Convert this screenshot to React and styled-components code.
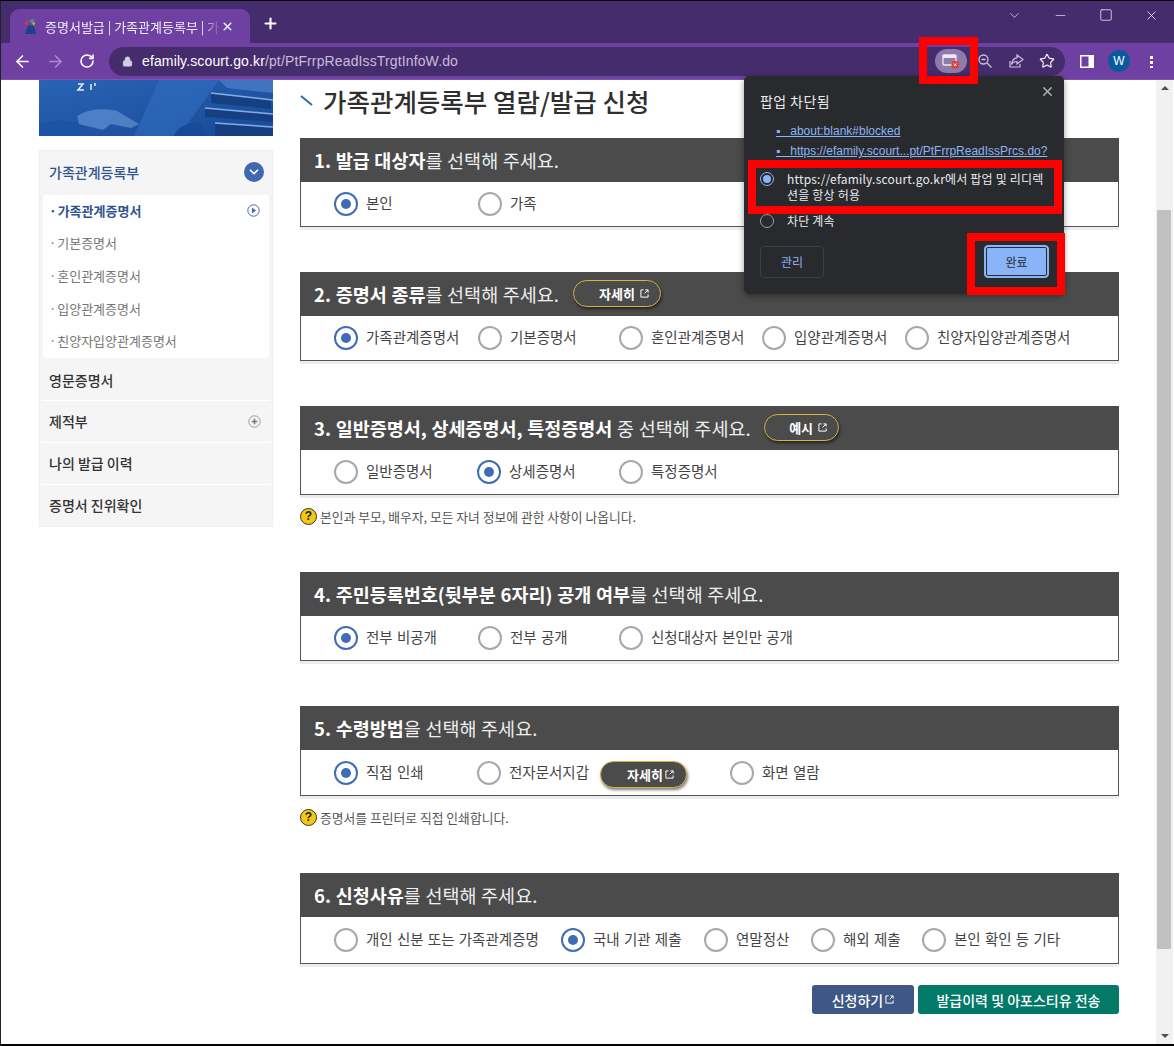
import React from 'react';
import styled, { createGlobalStyle } from 'styled-components';
import { ArrowLeft, ArrowRight, RotateCw, Lock, Star, X, Plus, ChevronDown, Minus, Square } from 'lucide-react';

const FONT = '"Noto Sans CJK KR", "Liberation Sans", sans-serif';

const Global = createGlobalStyle`
  html, body { margin: 0; padding: 0; background: #fff; }
  body { font-family: ${FONT}; }
  * { box-sizing: border-box; }
`;

const Screen = styled.div`
  position: relative;
  width: 1174px;
  height: 1046px;
  overflow: hidden;
  display: flex;
  flex-direction: column;
  background: #fff;
  border-top: 1px solid #000;
  border-bottom: 2px solid #000;
  border-left: 1px solid #222;
`;

const TabStrip = styled.div`
  height: 42px;
  flex: none;
  background: #452c6c;
  display: flex;
  align-items: flex-end;
  padding-left: 9px;
  color: #fff;
`;

const Tab = styled.div`
  width: 240px;
  height: 34px;
  background: #6d40a1;
  border-radius: 9px 9px 0 0;
  display: flex;
  align-items: center;
  padding: 0 10px 0 13px;
  font-size: 13px;
  color: #f0eaf6;
  white-space: nowrap;
`;

const TabTitle = styled.span`
  margin-left: 8px;
  width: 176px;
  overflow: hidden;
  mask-image: linear-gradient(to right, #000 90%, transparent 100%);
`;

const NewTab = styled.div`
  margin: 0 0 7px 12px;
  height: 26px;
  display: flex;
  align-items: center;
`;

const WindowBtns = styled.div`
  margin-left: auto;
  align-self: flex-start;
  display: flex;
  align-items: center;
  height: 28px;
  padding-right: 15px;
  gap: 31px;
`;

const Toolbar = styled.div`
  height: 37px;
  flex: none;
  background: #6d40a1;
  display: flex;
  align-items: center;
  padding-left: 12px;
  color: #fff;
  border-bottom: 1px solid #7f56ad;
`;

const NavIcons = styled.div`
  display: flex;
  align-items: center;
  gap: 14px;
  width: 96px;
`;

const Omnibox = styled.div`
  width: 956px;
  height: 29px;
  border-radius: 15px;
  background: #452c6c;
  display: flex;
  align-items: center;
  padding-left: 13px;
  font-family: "Liberation Sans", sans-serif;
  font-size: 14px;
  letter-spacing: 0.13px;
  color: #c9bcd9;
`;

const Host = styled.span`
  color: #fff;
  margin-left: 9px;
`;

const OmniIcons = styled.div`
  margin-left: auto;
  display: flex;
  align-items: center;
  gap: 15px;
  padding-right: 10px;
`;

const PopupChip = styled.div`
  width: 32px;
  height: 24px;
  border-radius: 12px;
  background: #8f7aa9;
  display: flex;
  align-items: center;
  justify-content: center;
  margin-right: -5px;
`;

const ToolRight = styled.div`
  display: flex;
  align-items: center;
  margin-left: 15px;
  gap: 14px;
`;

const Avatar = styled.div`
  width: 22px;
  height: 22px;
  border-radius: 50%;
  background: #0b5aa0;
  color: #fff;
  font: 12px "Liberation Sans", sans-serif;
  display: flex;
  align-items: center;
  justify-content: center;
`;

const Dots = styled.div`
  width: 3px;
  height: 13px;
  margin-left: 6px;
  background: radial-gradient(circle, #fff 1.5px, transparent 1.8px) 0 0 / 3px 5px;
`;

const Page = styled.div`
  flex: 1;
  display: flex;
  min-height: 0;
`;

const Sidebar = styled.div`
  width: 234px;
  margin-left: 38px;
  flex: none;
`;

const Banner = styled.svg`
  display: block;
  width: 234px;
  height: 56px;
`;

const Menu = styled.div`
  margin-top: 14px;
  background: #f5f5f6;
  border: 1px solid #efefef;
`;

const MenuHead = styled.div`
  height: 44px;
  display: flex;
  align-items: center;
  justify-content: space-between;
  padding: 0 8px 2px 9px;
  font-size: 14px;
  font-weight: 500;
  color: ${p => (p.$active ? '#30548f' : '#333')};
`;

const MenuRow = styled(MenuHead)`
  height: 42px;
  border-top: ${p => (p.$first ? 'none' : '1px solid #fff')};
  margin: 0 2px;
  padding: ${p => (p.$first ? '2px' : '0')} 9px 0 7px;
`;

const Circle = styled.div`
  width: 20px;
  height: 20px;
  border-radius: 50%;
  background: #3e68b0;
  display: flex;
  align-items: center;
  justify-content: center;
  color: #fff;
`;

const SubMenu = styled.div`
  background: #fff;
  margin: 0 3px;
  border-radius: 2px;
`;

const SubItem = styled.div`
  height: 32.6px;
  display: flex;
  align-items: center;
  justify-content: space-between;
  padding: 0 9px 2px 6px;
  font-size: 13px;
  word-spacing: -2px;
  color: ${p => (p.$active ? '#30548f' : '#777')};
  font-weight: ${p => (p.$active ? 700 : 400)};
`;

const Main = styled.div`
  width: 819px;
  margin-left: 27px;
  flex: none;
`;

const TitleRow = styled.div`
  height: 58px;
  display: flex;
  align-items: center;
  padding-bottom: 18px;
  gap: 10px;
  font-size: 25.5px;
  font-weight: 500;
  color: #2f2f2f;
  white-space: nowrap;
`;

const Section = styled.div`
  margin-top: ${p => p.$mt || 0}px;
`;

const SectionHead = styled.div`
  height: 44px;
  background: #4b4b4b;
  display: flex;
  align-items: center;
  padding: 0 0 1px 14px;
  font-size: 18.5px;
  word-spacing: 0.5px;
  color: #eee;
  white-space: pre;
  b { color: #fff; font-weight: 700; }
`;

const Options = styled.div`
  height: ${p => p.$h || 45}px;
  border: 1px solid #555;
  border-top: none;
  box-shadow: 0 3px 0 #ececec;
  display: flex;
  align-items: center;
  padding-left: 33px;
`;

const Option = styled.label`
  width: ${p => p.$w}px;
  flex: none;
  display: flex;
  align-items: center;
  gap: 8px;
  font-size: 14.5px;
  word-spacing: 1px;
  line-height: 22px;
  color: #444;
  white-space: nowrap;
`;

const Radio = styled.span`
  width: 24px;
  height: 24px;
  flex: none;
  border-radius: 50%;
  border: 2px solid ${p => (p.$on ? '#3e6db5' : '#a8a8a8')};
  background: #fff;
  display: flex;
  align-items: center;
  justify-content: center;
  &::after {
    content: '';
    width: 10px;
    height: 10px;
    border-radius: 50%;
    background: ${p => (p.$on ? '#3e6db5' : 'transparent')};
  }
`;

const OptionLabel = styled.span`
  margin-top: -2px;
`;

const Pill = styled.span`
  width: ${p => p.$w}px;
  height: 27px;
  flex: none;
  margin: 4px 0 0 3px;
  padding-left: 14px;
  border-radius: 14px;
  border: 1.5px solid #d9b23c;
  background: #4b4b4b;
  color: #fff;
  box-shadow: 1px 2px 3px rgba(0, 0, 0, 0.5);
  display: inline-flex;
  align-items: center;
  justify-content: center;
  gap: 2px;
  font-size: 13px;
  font-weight: 700;
  word-spacing: 0;
`;

const HeadPill = styled(Pill)`
  margin: 0 0 0 ${p => p.$ml}px;
`;

const Note = styled.div`
  height: 22px;
  margin-top: 10px;
  display: flex;
  align-items: center;
  gap: 3px;
  font-size: 12.8px;
  color: #555;
`;

const Help = styled.span`
  width: 17px;
  height: 17px;
  border-radius: 50%;
  background: #f2c811;
  border: 1.5px solid #333;
  color: #222;
  font: 700 12px "Liberation Sans", sans-serif;
  display: flex;
  align-items: center;
  justify-content: center;
`;

const Actions = styled.div`
  margin-top: 21px;
  display: flex;
  justify-content: flex-end;
  gap: 4px;
`;

const ActionBtn = styled.button`
  width: ${p => p.$w}px;
  height: 29px;
  border: none;
  border-radius: 3px;
  background: ${p => p.$bg};
  color: #fff;
  font-family: ${FONT};
  font-size: 14px;
  font-weight: 500;
  display: flex;
  align-items: center;
  justify-content: center;
  gap: 2px;
  padding: 0;
`;

const Scrollbar = styled.div`
  margin-left: 37px;
  width: 17px;
  background: #f1f1f1;
  display: flex;
  flex-direction: column;
  align-items: center;
  justify-content: space-between;
  padding: 6px 0;
  position: relative;
`;

const Thumb = styled.div`
  position: absolute;
  left: 1px;
  top: 130px;
  width: 14px;
  height: 739px;
  background: #c1c1c1;
`;

const Tri = styled.span`
  width: 0;
  height: 0;
  border-left: 4px solid transparent;
  border-right: 4px solid transparent;
  ${p => (p.$up ? 'border-bottom: 4px solid #505050;' : 'border-top: 4px solid #505050;')}
`;

const Bubble = styled.div`
  position: absolute;
  left: 743px;
  top: 75px;
  width: 320px;
  height: 218px;
  background: #292a2d;
  border-radius: 5px;
  box-shadow: 0 2px 6px rgba(0, 0, 0, 0.4);
  color: #e8eaed;
  padding: 13px 16px;
`;

const BubbleTitle = styled.div`
  font-size: 14px;
  line-height: 24px;
  letter-spacing: 0.4px;
`;

const BubbleClose = styled.div`
  position: absolute;
  right: 9px;
  top: 8px;
  color: #aeb1b6;
  display: flex;
`;

const BlockedLink = styled.a`
  display: block;
  margin-left: 16px;
  font-family: "Liberation Sans", "Noto Sans CJK KR", sans-serif;
  font-size: 12px;
  line-height: 20px;
  color: #8ab4f8;
  text-decoration: underline;
  white-space: pre;
`;

const Links = styled.div`
  margin-top: 8px;
`;

const Choice = styled.div`
  display: flex;
  gap: 13px;
  margin-top: ${p => p.$mt}px;
  font-size: 12px;
  line-height: 16px;
  letter-spacing: 0.2px;
`;

const ChoiceRadio = styled.span`
  width: 14px;
  height: 14px;
  flex: none;
  margin-top: 1px;
  border-radius: 50%;
  border: 1.5px solid ${p => (p.$on ? '#8ab4f8' : '#9aa0a6')};
  display: flex;
  align-items: center;
  justify-content: center;
  &::after {
    content: '';
    width: 8px;
    height: 8px;
    border-radius: 50%;
    background: ${p => (p.$on ? '#8ab4f8' : 'transparent')};
  }
`;

const BubbleFoot = styled.div`
  position: absolute;
  left: 16px;
  right: 15px;
  bottom: 16px;
  display: flex;
  justify-content: space-between;
  align-items: center;
`;

const ManageBtn = styled.div`
  width: 64px;
  height: 32px;
  border: 1px solid #3c4043;
  border-radius: 4px;
  color: #8ab4f8;
  font-size: 12px;
  display: flex;
  align-items: center;
  justify-content: center;
`;

const DoneBtn = styled.div`
  width: 65px;
  height: 33px;
  border-radius: 4px;
  background: #8ab4f8;
  border: 1px solid #8ab4f8;
  outline: 1px solid #292a2d;
  outline-offset: -3px;
  color: #292a2d;
  font-size: 12px;
  display: flex;
  align-items: center;
  justify-content: center;
`;

const RedBox = styled.div`
  position: absolute;
  left: ${p => p.$x}px;
  top: ${p => p.$y}px;
  width: ${p => p.$w}px;
  height: ${p => p.$h}px;
  border: 8px solid #f00;
  pointer-events: none;
`;

const ExtIcon = ({ size = 9 }) => (
  <svg width={size} height={size} viewBox="0 0 10 10" fill="none" stroke="currentColor" strokeWidth="1.1">
    <path d="M4 1H1v8h8V6M5 5l4-4M6 1h3v3" />
  </svg>
);

const Favicon = () => (
  <svg width="14" height="17" viewBox="0 0 14 17">
    <path d="M2 16 5 7l6 1 2 8z" fill="#1e3f8a" />
    <path d="M1 5l4 3 1-6z" fill="#d8324a" />
    <path d="M6 2l6-1-3 5z" fill="#2f9e8f" />
    <path d="M9 5l3-1-1 4z" fill="#e2b93b" />
  </svg>
);

const ZoomOut = () => (
  <svg width="16" height="16" viewBox="0 0 16 16" fill="none" stroke="#cdbfe0" strokeWidth="1.3">
    <circle cx="6.5" cy="6.5" r="4.5" />
    <path d="M10 10l4.5 4.5M4.5 6.5h4" />
  </svg>
);

const Share = () => (
  <svg width="16" height="16" viewBox="0 0 16 16" fill="none" stroke="#cdbfe0" strokeWidth="1.2">
    <path d="M2 8v6h10v-3" />
    <path d="M9 2l6 4.5L9 11V8.5C6 8.5 4.5 9.5 3.5 11.5 4 7.5 6 5 9 4.8z" />
  </svg>
);

const PopupIcon = () => (
  <svg width="18" height="16" viewBox="0 0 18 16">
    <rect x="1" y="2" width="13" height="10" rx="1" fill="none" stroke="#efe9f5" strokeWidth="1.3" />
    <rect x="1" y="2" width="13" height="3" fill="#efe9f5" />
    <rect x="9.5" y="8" width="7.5" height="7.5" rx="2" fill="#d9453d" />
    <path d="M12 10.5l2.5 2.5M14.5 10.5L12 13" stroke="#fff" strokeWidth="0.9" />
  </svg>
);

const SidePanel = () => (
  <svg width="14" height="13" viewBox="0 0 14 13">
    <rect width="14" height="13" fill="#fff" />
    <rect x="1.5" y="1.5" width="7" height="10" fill="#6d40a1" />
  </svg>
);

const PlayDot = () => (
  <svg width="13" height="13" viewBox="0 0 13 13">
    <circle cx="6.5" cy="6.5" r="5.7" fill="none" stroke="#3e68b0" strokeWidth="1" />
    <path d="M5 3.5l4 3-4 3z" fill="#3e68b0" />
  </svg>
);

const PlusDot = () => (
  <svg width="13" height="13" viewBox="0 0 13 13">
    <circle cx="6.5" cy="6.5" r="5.7" fill="none" stroke="#999" strokeWidth="1" />
    <path d="M6.5 3.7v5.6M3.7 6.5h5.6" stroke="#777" strokeWidth="1.6" />
  </svg>
);

const TitleMark = () => (
  <svg width="13" height="11" viewBox="0 0 13 11">
    <path d="M1 1l11 9" stroke="#2f6aa8" strokeWidth="2" />
  </svg>
);

// photo of hands on a keyboard next to a stack of books, in blue tones
const BannerArt = () => (
  <Banner viewBox="0 0 234 56" preserveAspectRatio="none">
    <defs>
      <linearGradient id="bannerFill" x1="0" y1="0" x2="1" y2="1">
        <stop offset="0" stopColor="#2a63b4" />
        <stop offset="1" stopColor="#174a98" />
      </linearGradient>
    </defs>
    <rect width="234" height="56" fill="url(#bannerFill)" />
    <path d="M120 0h60l-40 56H95z" fill="#3570c2" opacity="0.55" />
    <path d="M0 44c20-6 36-4 48 2l-10 10H0z" fill="#1c54a4" />
    <path d="M38 36c12-8 30-8 40-5l22 13-8 4-20-4-8 6-24-6z" fill="#5a88cc" opacity="0.8" />
    <path d="M135 56c2-8 12-14 26-13l6 13z" fill="#174a98" />
    <path d="M172 14l60 7v8l-60-6zM166 29l68 6v7l-68-5zM176 44l58 4v8h-58z" fill="#153f80" />
    <path d="M172 13l62 7M166 28l68 6M176 43l58 4" stroke="#86abe0" strokeWidth="1.5" />
    <path d="M180 0h54v13l-46-5z" fill="#4a7cc6" opacity="0.8" />
    <path d="M39 4h5l-5 6h6M52 4v6M56 3v3" stroke="#e4ecf7" strokeWidth="1.5" fill="none" />
  </Banner>
);

const sections = [
  {
    mt: 0,
    head: <><b>1. 발급 대상자</b>를 선택해 주세요.</>,
    options: [['본인', 144, true], ['가족', 140]],
  },
  {
    mt: 45,
    head: <><b>2. 증명서 종류</b>를 선택해 주세요.<HeadPill $w={88} $ml={14}>자세히 <ExtIcon /></HeadPill></>,
    options: [['가족관계증명서', 144, true], ['기본증명서', 141], ['혼인관계증명서', 143], ['입양관계증명서', 143], ['친양자입양관계증명서', 180]],
  },
  {
    mt: 45,
    head: <><b>3. 일반증명서, 상세증명서, 특정증명서</b> 중 선택해 주세요.<HeadPill $w={75} $ml={13}>예시 <ExtIcon /></HeadPill></>,
    options: [['일반증명서', 143], ['상세증명서', 142, true], ['특정증명서', 140]],
    note: '본인과 부모, 배우자, 모든 자녀 정보에 관한 사항이 나옵니다.',
  },
  {
    mt: 45,
    head: <><b>4. 주민등록번호(뒷부분 6자리) 공개 여부</b>를 선택해 주세요.</>,
    options: [['전부 비공개', 144, true], ['전부 공개', 141], ['신청대상자 본인만 공개', 200]],
  },
  {
    mt: 45,
    h: 46,
    head: <><b>5. 수령방법</b>을 선택해 주세요.</>,
    options: [['직접 인쇄', 143, true], ['전자문서지갑', 253, false, true], ['화면 열람', 120]],
    note: '증명서를 프린터로 직접 인쇄합니다.',
  },
  {
    mt: 45,
    h: 47,
    head: <><b>6. 신청사유</b>를 선택해 주세요.</>,
    options: [['개인 신분 또는 가족관계증명', 227], ['국내 기관 제출', 143, true], ['연말정산', 107], ['해외 제출', 111], ['본인 확인 등 기타', 170]],
  },
];

export default function App() {
  return (
    <Screen>
      <Global />
      <TabStrip>
        <Tab>
          <Favicon />
          <TabTitle>증명서발급 | 가족관계등록부 | 가</TabTitle>
          <X size={13} strokeWidth={3} />
        </Tab>
        <NewTab><Plus size={17} strokeWidth={3} /></NewTab>
        <WindowBtns>
          <ChevronDown size={15} strokeWidth={1} />
          <Minus size={15} strokeWidth={1} />
          <Square size={14} strokeWidth={1.2} />
          <X size={15} strokeWidth={1.2} />
        </WindowBtns>
      </TabStrip>
      <Toolbar>
        <NavIcons>
          <ArrowLeft size={19} strokeWidth={2} />
          <ArrowRight size={19} strokeWidth={2} color="#a98ccb" />
          <RotateCw size={16} strokeWidth={2.4} />
        </NavIcons>
        <Omnibox>
          <Lock size={11} fill="#d5cbe2" color="#d5cbe2" />
          <Host>efamily.scourt.go.kr</Host>/pt/PtFrrpReadIssTrgtInfoW.do
          <OmniIcons>
            <PopupChip><PopupIcon /></PopupChip>
            <ZoomOut />
            <Share />
            <Star size={16} color="#f0eaf6" strokeWidth={1.8} />
          </OmniIcons>
        </Omnibox>
        <ToolRight>
          <SidePanel />
          <Avatar>W</Avatar>
          <Dots />
        </ToolRight>
      </Toolbar>
      <Page>
        <Sidebar>
          <BannerArt />
          <Menu>
            <MenuHead $active>
              가족관계등록부
              <Circle><ChevronDown size={14} strokeWidth={3} /></Circle>
            </MenuHead>
            <SubMenu>
              <SubItem $active><span>· 가족관계증명서</span><PlayDot /></SubItem>
              <SubItem><span>· 기본증명서</span></SubItem>
              <SubItem><span>· 혼인관계증명서</span></SubItem>
              <SubItem><span>· 입양관계증명서</span></SubItem>
              <SubItem><span>· 친양자입양관계증명서</span></SubItem>
            </SubMenu>
            <MenuRow $first>영문증명서</MenuRow>
            <MenuRow>제적부<PlusDot /></MenuRow>
            <MenuRow>나의 발급 이력</MenuRow>
            <MenuRow>증명서 진위확인</MenuRow>
          </Menu>
        </Sidebar>
        <Main>
          <TitleRow><TitleMark />가족관계등록부 열람/발급 신청</TitleRow>
          {sections.map((s, i) => (
            <Section key={i} $mt={s.mt}>
              <SectionHead>{s.head}</SectionHead>
              <Options $h={s.h}>
                {s.options.map(([label, w, on, pill]) => (
                  <Option key={label} $w={w}>
                    <Radio $on={on} />
                    <OptionLabel>{label}</OptionLabel>
                    {pill && <Pill $w={87}>자세히 <ExtIcon /></Pill>}
                  </Option>
                ))}
              </Options>
              {s.note && <Note><Help>?</Help>{s.note}</Note>}
            </Section>
          ))}
          <Actions>
            <ActionBtn $w={102} $bg="#3e5784">신청하기 <ExtIcon /></ActionBtn>
            <ActionBtn $w={201} $bg="#037a68">발급이력 및 아포스티유 전송</ActionBtn>
          </Actions>
        </Main>
        <Scrollbar>
          <Thumb />
          <Tri $up />
          <Tri />
        </Scrollbar>
      </Page>
      <Bubble>
        <BubbleClose><X size={15} strokeWidth={2.4} /></BubbleClose>
        <BubbleTitle>팝업 차단됨</BubbleTitle>
        <Links>
          <BlockedLink>▪   about:blank#blocked</BlockedLink>
          <BlockedLink>▪   https://efamily.scourt...pt/PtFrrpReadIssPrcs.do?</BlockedLink>
        </Links>
        <Choice $mt={10}>
          <ChoiceRadio $on />
          <span>https://efamily.scourt.go.kr에서 팝업 및 리디렉<br />션을 항상 허용</span>
        </Choice>
        <Choice $mt={10}>
          <ChoiceRadio />
          <span>차단 계속</span>
        </Choice>
        <BubbleFoot>
          <ManageBtn>관리</ManageBtn>
          <DoneBtn>완료</DoneBtn>
        </BubbleFoot>
      </Bubble>
      <RedBox $x={918} $y={36} $w={59} $h={47} />
      <RedBox $x={747} $y={159} $w={314} $h={54} />
      <RedBox $x={966} $y={232} $w={98} $h={62} />
    </Screen>
  );
}
